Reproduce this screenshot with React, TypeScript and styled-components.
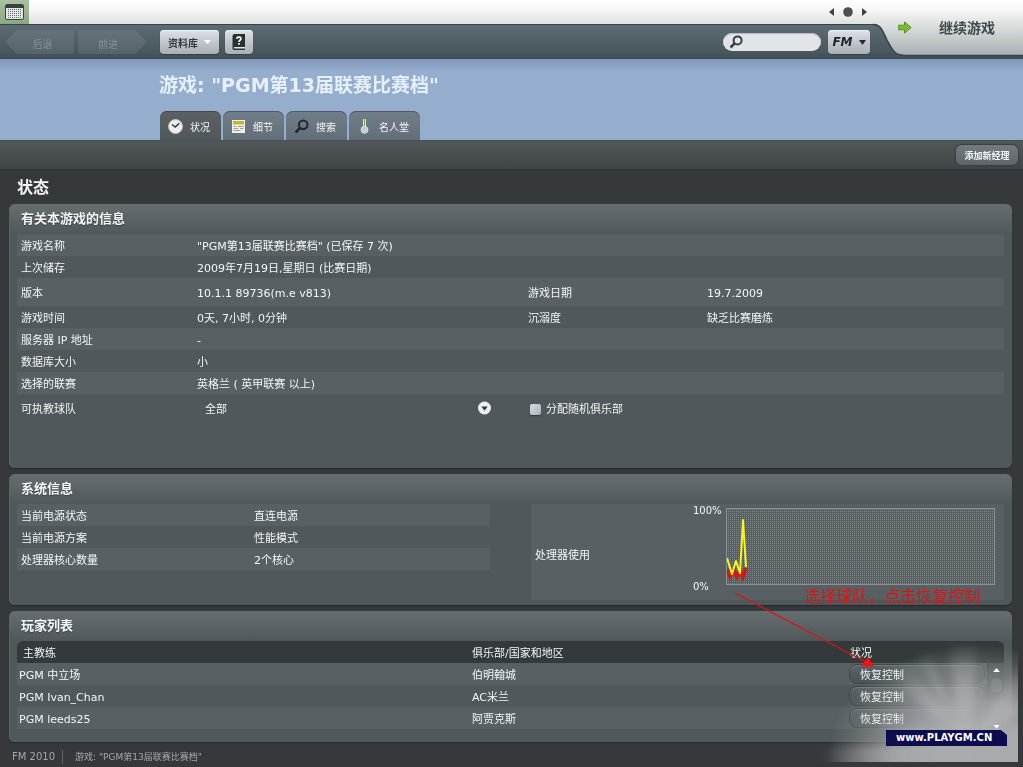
import React from "react";
import styled, { createGlobalStyle, css } from "styled-components";

const fonts = `"DejaVu Sans", "Noto Sans CJK SC", sans-serif`;

const GlobalStyle = createGlobalStyle`
  *, *::before, *::after { box-sizing: border-box; }
  html, body { margin: 0; background: #35393c; }
  body, button, input, select, table { font-family: ${fonts}; font-size: 11px; color: #f4f6f6; }
  button, input, select { margin: 0; padding: 0; border: 0; background: none; }
  button, select { cursor: pointer; }
  svg { display: block; flex: none; }
`;

const Page = styled.div`
  position: relative;
  min-height: 100vh;
  line-height: 16px;
  background: #35393c;
  overflow: hidden;
`;

/* ---------- header ---------- */

const Header = styled.header`
  display: grid;
  grid-template-columns: minmax(0, 1fr) 150px;
  height: 59px;
`;

const TopStrip = styled.div`
  display: flex;
  justify-content: space-between;
  height: 24px;
  background: linear-gradient(#ffffff, #f6f7f6 40%, #dde1e0);
`;

const CalendarButton = styled.button`
  display: flex;
  align-items: center;
  justify-content: center;
  width: 29px;
  height: 24px;
  background: linear-gradient(#a9c2a2, #8aa682);
`;

const Pager = styled.div`
  display: flex;
  align-items: center;
  gap: 9px;
  padding-right: 6px;
`;

const PagerButton = styled.button`
  display: flex;
`;

const NavBar = styled.nav`
  display: flex;
  align-items: center;
  height: 35px;
  padding: 0 3px 0 5px;
  border-top: 1px solid #35444b;
  background: linear-gradient(#5d6c72, #47555c 85%, #3c4a51);
`;

const HistoryButton = styled.button<{ $forward?: boolean }>`
  width: 69px;
  height: 24px;
  margin-right: 4px;
  font-size: 10px;
  color: #869297;
  background: linear-gradient(#66747a, #55636a);
  border-radius: 4px;
  clip-path: ${(p) =>
    p.$forward
      ? "polygon(0 0, 57px 0, 100% 50%, 57px 100%, 0 100%)"
      : "polygon(12px 0, 100% 0, 100% 100%, 12px 100%, 0 50%)"};
  padding: ${(p) => (p.$forward ? "2px 9px 0 0" : "2px 0 0 6px")};
`;

const SilverButton = styled.button<{ $width: number }>`
  display: flex;
  align-items: center;
  justify-content: center;
  gap: 6px;
  width: ${(p) => p.$width}px;
  height: 24px;
  font-size: 10px;
  font-weight: bold;
  color: #33393c;
  background: linear-gradient(#dfe2e6, #c2c7ce 50%, #a9afb8);
  border-radius: 4px;
  box-shadow: 0 1px 1px #333f45, inset 0 1px 0 #eef0f2;
`;

const ToolGroup = styled.div`
  display: flex;
  gap: 6px;
  margin-left: 9px;
`;

const SearchGroup = styled.div`
  display: flex;
  align-items: center;
  gap: 7px;
  margin-left: auto;
`;

const SearchBox = styled.label`
  display: flex;
  align-items: center;
  gap: 4px;
  width: 98px;
  height: 18px;
  padding: 0 8px 0 6px;
  border-radius: 9px;
  background: #e2e4e8;
  box-shadow: inset 0 1px 1px #b5bac0;
`;

const SearchInput = styled.input`
  width: 100%;
  min-width: 0;
  color: #33393c;
  outline: none;
`;

const FmMark = styled.span`
  font-size: 12px;
  font-style: italic;
  color: #1f2426;
`;

const ContinueArea = styled.div`
  display: grid;
  height: 59px;
  > * {
    grid-area: 1 / 1;
  }
`;

const ContinueButton = styled.button`
  display: flex;
  align-items: center;
  gap: 27px;
  height: 54px;
  padding-left: 25px;
  font-size: 14px;
  font-weight: bold;
  color: #43494b;
`;

/* ---------- title and tabs ---------- */

const Banner = styled.div`
  display: flex;
  flex-direction: column;
  justify-content: space-between;
  height: 81px;
  padding: 14px 0 0 159px;
  background: linear-gradient(#8197b9, #95aece 12px);
`;

const Title = styled.h1`
  margin: 0;
  font-size: 19px;
  line-height: 24px;
  color: #e6f0fb;
`;

const Tabs = styled.div`
  display: flex;
  gap: 2px;
  padding-left: 1px;
`;

const Tab = styled.button<{ $active?: boolean }>`
  display: flex;
  align-items: center;
  gap: 7px;
  height: 29px;
  padding: 1px 11px 0 8px;
  font-size: 10px;
  border-radius: 7px 7px 0 0;
  box-shadow: inset 0 1px 0 #4f5a66;
  background: linear-gradient(#717f8a, #626e78);
  ${(p) =>
    p.$active &&
    css`
      background: linear-gradient(#5c6163, #50575a);
      box-shadow: inset 0 1px 0 #41484c;
    `}
`;

const ActionBar = styled.div`
  display: flex;
  align-items: center;
  justify-content: flex-end;
  height: 30px;
  padding-right: 5px;
  border-top: 1px solid #454f58;
  border-bottom: 1px solid #2d3133;
  background: linear-gradient(#52585a, #3f4446);
`;

const AddButton = styled.button`
  width: 62px;
  height: 20px;
  font-size: 9px;
  font-weight: bold;
  border-radius: 6px;
  background: linear-gradient(#747b80, #5e6469);
  box-shadow: 0 0 1px 1px #3a3f42;
`;

/* ---------- panels ---------- */

const Main = styled.main`
  display: flex;
  flex-direction: column;
  gap: 6px;
  padding: 0 11px 0 9px;
`;

const SectionTitle = styled.h2`
  margin: 0;
  padding: 8px 0 0 8px;
  font-size: 16px;
  line-height: 20px;
`;

const Panel = styled.section<{ $bottom: number }>`
  padding: 0 8px ${(p) => p.$bottom}px;
  border-radius: 6px;
  background: linear-gradient(#676e71, #50585b 30px);
  box-shadow: inset 1px 0 0 #5d6568, 0 1px 1px #26292b;
`;

const PanelTitle = styled.h3`
  margin: 0;
  padding-left: 4px;
  font-size: 13px;
  line-height: 30px;
  text-shadow: 0 1px 1px #3a3f42;
`;

const InfoList = styled.dl`
  margin: 0;
`;

const InfoRow = styled.div<{ $columns: string; $tall?: boolean; $light?: boolean }>`
  display: grid;
  grid-template-columns: ${(p) => p.$columns};
  align-items: center;
  height: ${(p) => (p.$tall ? 28 : 22)}px;
  padding: 3px 0 0 4px;
  background: ${(p) => (p.$light ? "#586063" : "transparent")};
`;

const Term = styled.dt``;

const Detail = styled.dd`
  margin: 0;
`;

const SelectWrap = styled.div`
  position: relative;
  width: 295px;
  max-width: 100%;
`;

const Select = styled.select`
  appearance: none;
  display: block;
  width: 100%;
  height: 20px;
  padding-left: 8px;
  color: #f4f6f6;
  option {
    color: #222;
  }
`;

const SelectArrow = styled.span`
  position: absolute;
  top: 1px;
  right: 0;
  pointer-events: none;
`;

const CheckLabel = styled.label`
  display: flex;
  align-items: center;
  gap: 5px;
  padding-left: 2px;
`;

const CheckBox = styled.input`
  appearance: none;
  width: 11px;
  height: 11px;
  border-radius: 2px;
  background: linear-gradient(135deg, #d9dde2, #a9b0b8);
  box-shadow: 0 1px 1px #33393c;
  &:checked {
    background: #5b7f38;
  }
`;

const SystemGrid = styled.div`
  display: grid;
  grid-template-columns: 1fr 1fr;
  gap: 41px;
`;

const CpuBox = styled.div`
  display: flex;
  height: 96px;
  padding: 4px 9px 0 4px;
  background: #586063;
`;

const CpuLabel = styled.div`
  align-self: center;
  flex: 1;
  padding-top: 4px;
`;

const Axis = styled.div`
  display: flex;
  flex-direction: column;
  justify-content: space-between;
  width: 33px;
  height: 82px;
  font-size: 10px;
  line-height: 6px;
`;

const Graph = styled.div`
  flex: 0 1 269px;
  height: 77px;
  border: 1px solid #8b9294;
  background: conic-gradient(#7d8486 25%, transparent 0) 0 0 / 2px 2px;
`;

const Players = styled.table`
  width: 100%;
  table-layout: fixed;
  border-collapse: separate;
  border-spacing: 0;
`;

const HeadCell = styled.th`
  height: 22px;
  padding: 3px 0 0 1px;
  font-weight: normal;
  text-align: left;
  background: #34393b;
  &:first-child {
    padding-left: 6px;
    border-radius: 6px 0 0 0;
  }
  &:last-child {
    border-radius: 0 6px 0 0;
  }
`;

const PlayerRow = styled.tr`
  height: 22px;
  &:nth-child(odd) {
    background: #586063;
  }
`;

const Cell = styled.td`
  padding: 3px 0 0 1px;
  &:first-child {
    padding-left: 2px;
  }
`;

const ActionCell = styled.td`
  padding: 0 2px 0 0;
`;

const ResumeButton = styled.button`
  display: block;
  width: 100%;
  height: 20px;
  padding: 0 0 0 10px;
  text-align: left;
  border: 1px solid #3f4648;
  border-radius: 8px;
  background: linear-gradient(#5c6467, #4b5356);
  box-shadow: inset 0 1px 0 #747c7f;
`;

const ScrollCell = styled.td`
  padding: 0;
  vertical-align: top;
  background: #495053;
  border-left: 1px solid #3b4143;
`;

const Scroller = styled.div`
  display: flex;
  flex-direction: column;
  align-items: center;
  height: 66px;
  padding: 5px 0 0;
`;

const ScrollThumb = styled.div`
  width: 13px;
  height: 17px;
  margin: 5px 0 auto;
  border: 1px solid #3f4648;
  border-radius: 6px;
  background: #5f6769;
`;

const Footer = styled.footer`
  display: flex;
  align-items: center;
  height: 25px;
  padding: 4px 0 0 12px;
  font-size: 10px;
  color: #a3a8aa;
`;

const FooterGame = styled.span`
  margin-left: 7px;
  padding-left: 12px;
  font-size: 9px;
  line-height: 14px;
  border-left: 1px solid #5f6567;
`;

/* ---------- overlays ---------- */

const Glow = styled.div`
  position: absolute;
  right: 5px;
  bottom: 5px;
  pointer-events: none;
  mix-blend-mode: lighten;
`;

const SiteBadge = styled.a`
  position: absolute;
  right: 16px;
  bottom: 21px;
  width: 121px;
  height: 16px;
  padding-left: 10px;
  font-size: 10px;
  font-weight: bold;
  line-height: 15px;
  color: #fff;
  text-decoration: none;
  background: #0c0c4e;
  clip-path: polygon(0 0, 115px 0, 100% 5px, 100% 100%, 0 100%);
`;

const Note = styled.div`
  position: absolute;
  right: 43px;
  bottom: 160px;
  font-family: "Noto Sans CJK SC", sans-serif;
  font-size: 16px;
  line-height: 24px;
  color: #dc1414;
  pointer-events: none;
`;

const NoteArrow = styled.div`
  position: absolute;
  right: 147px;
  bottom: 94px;
  pointer-events: none;
`;

/* ---------- drawings ---------- */

const CalendarIcon = () => (
  <svg width="19" height="16" viewBox="0 0 19 16">
    <rect x="0.5" y="0.5" width="18" height="15" rx="1.5" fill="#e4e8e4" stroke="#3b4140" />
    <rect x="1" y="1" width="17" height="3" fill="#3b4140" />
    <path d="M3 5.500h14M3 7.500h14M3 9.500h14M3 11.500h14M3 13.500h14" stroke="#666d6c" strokeDasharray="1 1" />
  </svg>
);

const Triangle = ({ d, w, h, color }: { d: string; w: number; h: number; color: string }) => (
  <svg width={w} height={h} viewBox={`0 0 ${w} ${h}`}>
    <path d={d} fill={color} />
  </svg>
);

const HelpIcon = () => (
  <svg width="14" height="17" viewBox="0 0 14 17">
    <path d="M2.5 0H13v13H2.5C1.600 13 1.500 14.500 2.500 14.500H13V16H2.500C1 16 0.500 15 0.500 14V2C0.500 1 1.500 0 2.500 0z" fill="#2b3032" />
    <path d="M2.500 13.200H13v1H2.500z" fill="#f0f2f3" />
    <path d="M4.800 4.800C4.800 2.600 9 2.600 9 4.800C9 6.300 6.900 6.200 6.900 8" fill="none" stroke="#fff" strokeWidth="1.600" />
    <rect x="6.100" y="9" width="1.700" height="1.700" fill="#fff" />
  </svg>
);

const Magnifier = ({ color, size }: { color: string; size: number }) => (
  <svg width={size} height={size} viewBox="0 0 14 14">
    <circle cx="8.600" cy="5.400" r="4" fill="none" stroke={color} strokeWidth="2" />
    <path d="M5.600 8.400L1.500 12.500" stroke={color} strokeWidth="2.600" />
  </svg>
);

const ClockIcon = () => (
  <svg width="15" height="15" viewBox="0 0 15 15">
    <circle cx="7.500" cy="7.500" r="6.900" fill="#eeeeee" stroke="#c9cbcb" />
    <path d="M4 5.500L7.300 8L11.300 4.300" fill="none" stroke="#333" strokeWidth="1.500" />
  </svg>
);

const NotesIcon = () => (
  <svg width="15" height="15" viewBox="0 0 15 15">
    <path d="M1 1h13v13H1z" fill="#f1f1ea" />
    <path d="M2 2h11v3.500H2z" fill="#c9b42e" />
    <path d="M2.500 7.500h3M7 7.500h5.500M2.500 9.500h5M9 9.500h3.500M2.500 11.500h7" stroke="#9a9e9c" />
  </svg>
);

const MedalIcon = () => (
  <svg width="15" height="15" viewBox="0 0 15 15">
    <path d="M6 0h3v8H6z" fill="#dfe8d8" />
    <path d="M7 0h1v8H7z" fill="#76a83e" />
    <circle cx="7.500" cy="10.800" r="3.500" fill="#c3cbd0" stroke="#dfe4e7" strokeWidth="0.800" />
  </svg>
);

const GreenArrow = () => (
  <svg width="14" height="13" viewBox="0 0 14 13">
    <path d="M0.600 4.200H6.500V0.900L13.200 6.500L6.500 12.100V8.800H0.600z" fill="#7cbb33" stroke="#5c9426" />
  </svg>
);

const HeaderCurve = () => (
  <svg width="150" height="59" viewBox="0 0 150 59">
    <defs>
      <linearGradient id="navFill" x1="0" y1="24" x2="0" y2="59" gradientUnits="userSpaceOnUse">
        <stop offset="0" stopColor="#5d6c72" />
        <stop offset="0.850" stopColor="#47555c" />
        <stop offset="1" stopColor="#3c4a51" />
      </linearGradient>
      <linearGradient id="silverFill" x1="0" y1="0" x2="0" y2="55" gradientUnits="userSpaceOnUse">
        <stop offset="0" stopColor="#ffffff" />
        <stop offset="0.180" stopColor="#f6f7f6" />
        <stop offset="0.440" stopColor="#dde1e0" />
        <stop offset="1" stopColor="#a9afb2" />
      </linearGradient>
    </defs>
    <rect y="24" width="150" height="35" fill="url(#navFill)" />
    <path d="M0 0H150V55H32C21 55 19 49 14 40C9 30 8 24 0 24Z" fill="url(#silverFill)" />
    <path d="M150 55.500H32C21 55.500 19 49 14 40C9 30 8 24.500 0 24.500" fill="none" stroke="#35444b" strokeWidth="1.500" />
  </svg>
);

const CircleArrow = () => (
  <svg width="15" height="15" viewBox="0 0 15 15">
    <circle cx="7.500" cy="7" r="6.500" fill="#eceeef" />
    <path d="M4.300 5.500h6.400L7.500 9.800z" fill="#33393b" />
  </svg>
);

const CpuLines = () => (
  <svg width="24" height="75" viewBox="0 0 24 75">
    <path d="M0 60L3 68L7 61L10 68L13 61L16 68L19 59" fill="none" stroke="#d01818" strokeWidth="3.500" />
    <path d="M0 49L5 65L9 52L13 64L16 11L19 58" fill="none" stroke="#f6f61e" strokeWidth="2" strokeLinejoin="round" />
  </svg>
);

const Burst = () => (
  <svg width="205" height="126" viewBox="0 0 205 126">
    <defs>
      <radialGradient id="core" cx="0" cy="0" r="1" gradientUnits="userSpaceOnUse" gradientTransform="translate(165 116) scale(150 108)">
        <stop offset="0" stopColor="#acadaf" />
        <stop offset="0.450" stopColor="#a9aaac" stopOpacity="0.850" />
        <stop offset="0.700" stopColor="#a6a8aa" stopOpacity="0.450" />
        <stop offset="1" stopColor="#a0a2a4" stopOpacity="0" />
      </radialGradient>
      <linearGradient id="floor" x1="0" x2="1">
        <stop offset="0" stopColor="#a9aaac" stopOpacity="0" />
        <stop offset="0.350" stopColor="#a9aaac" stopOpacity="0.850" />
        <stop offset="1" stopColor="#a9aaac" />
      </linearGradient>
      <radialGradient id="ray" cx="150" cy="95" r="90" gradientUnits="userSpaceOnUse">
        <stop offset="0" stopColor="#c4c5c6" stopOpacity="0.300" />
        <stop offset="0.500" stopColor="#c4c5c6" stopOpacity="0.400" />
        <stop offset="1" stopColor="#c4c5c6" stopOpacity="0" />
      </radialGradient>
      <filter id="soft" x="-20%" y="-20%" width="140%" height="140%">
        <feGaussianBlur stdDeviation="4" />
      </filter>
      <clipPath id="frame">
        <rect width="205" height="126" />
      </clipPath>
    </defs>
    <g clipPath="url(#frame)">
      <rect width="205" height="126" fill="url(#core)" />
      <g filter="url(#soft)">
        <path d="M8 112L225 100V146H8z" fill="url(#floor)" />
        <path d="M120 88H225V145H120z" fill="#a9aaac" fillOpacity="0.850" />
        <path d="M150 100L56 30L84 12z" fill="url(#ray)" />
        <path d="M150 100L100 18L112 8z" fill="url(#ray)" />
        <path d="M145 100L136 4L164 4L158 100z" fill="url(#ray)" />
        <path d="M158 100L215 20L225 70z" fill="url(#ray)" />
        <path d="M150 100L10 92L10 76z" fill="url(#ray)" />
      </g>
    </g>
  </svg>
);

const ArrowDrawing = () => (
  <svg width="144" height="82" viewBox="0 0 144 82">
    <path d="M3 2L134 71" stroke="#dc1414" strokeWidth="1.300" />
    <path d="M142 76L129 75L136 66z" fill="#f01414" />
  </svg>
);

/* ---------- data ---------- */

const GAME_COLUMNS = "176fr 331fr 179fr 297fr";
const SYSTEM_COLUMNS = "233fr 236fr";

type GameRow = { cells: string[]; tall?: boolean };

const gameRows: GameRow[] = [
  { cells: ["游戏名称", '"PGM第13届联赛比赛档" (已保存 7 次)'] },
  { cells: ["上次储存", "2009年7月19日,星期日 (比赛日期)"] },
  { cells: ["版本", "10.1.1 89736(m.e v813)", "游戏日期", "19.7.2009"], tall: true },
  { cells: ["游戏时间", "0天, 7小时, 0分钟", "沉溺度", "缺乏比赛磨炼"] },
  { cells: ["服务器 IP 地址", "-"] },
  { cells: ["数据库大小", "小"] },
  { cells: ["选择的联赛", "英格兰 ( 英甲联赛 以上)"] },
];

const systemRows = [
  ["当前电源状态", "直连电源"],
  ["当前电源方案", "性能模式"],
  ["处理器核心数量", "2个核心"],
];

const players = [
  ["PGM 中立场", "伯明翰城"],
  ["PGM Ivan_Chan", "AC米兰"],
  ["PGM leeds25", "阿贾克斯"],
];

const tabs = [
  { label: "状况", icon: <ClockIcon />, active: true },
  { label: "细节", icon: <NotesIcon /> },
  { label: "搜索", icon: <Magnifier color="#24292b" size={15} /> },
  { label: "名人堂", icon: <MedalIcon /> },
];

export default function App() {
  return (
    <Page lang="zh-CN">
      <GlobalStyle />
      <Header>
        <div>
          <TopStrip>
            <CalendarButton aria-label="日历">
              <CalendarIcon />
            </CalendarButton>
            <Pager>
              <PagerButton aria-label="上一个">
                <Triangle d="M5 0v8L0 4z" w={5} h={8} color="#3d4345" />
              </PagerButton>
              <svg width="10" height="10" viewBox="0 0 10 10">
                <circle cx="5" cy="5" r="4.800" fill="#4a4f52" />
              </svg>
              <PagerButton aria-label="下一个">
                <Triangle d="M0 0v8L5 4z" w={5} h={8} color="#3d4345" />
              </PagerButton>
            </Pager>
          </TopStrip>
          <NavBar>
            <HistoryButton>后退</HistoryButton>
            <HistoryButton $forward>前进</HistoryButton>
            <ToolGroup>
              <SilverButton $width={59}>
                资料库
                <Triangle d="M0 1h7L3.500 5z" w={7} h={6} color="#ffffff" />
              </SilverButton>
              <SilverButton $width={28} aria-label="帮助">
                <HelpIcon />
              </SilverButton>
            </ToolGroup>
            <SearchGroup>
              <SearchBox>
                <Magnifier color="#3b4144" size={14} />
                <SearchInput aria-label="搜索" />
              </SearchBox>
              <SilverButton $width={42}>
                <FmMark>FM</FmMark>
                <Triangle d="M0 0h7L3.500 5z" w={7} h={5} color="#262b2d" />
              </SilverButton>
            </SearchGroup>
          </NavBar>
        </div>
        <ContinueArea>
          <HeaderCurve />
          <ContinueButton>
            <GreenArrow />
            继续游戏
          </ContinueButton>
        </ContinueArea>
      </Header>

      <Banner>
        <Title>游戏: "PGM第13届联赛比赛档"</Title>
        <Tabs>
          {tabs.map((t) => (
            <Tab key={t.label} $active={t.active}>
              {t.icon}
              {t.label}
            </Tab>
          ))}
        </Tabs>
      </Banner>
      <ActionBar>
        <AddButton>添加新经理</AddButton>
      </ActionBar>

      <Main>
        <SectionTitle>状态</SectionTitle>

        <Panel $bottom={46}>
          <PanelTitle>有关本游戏的信息</PanelTitle>
          <InfoList>
            {gameRows.map((row, i) => (
              <InfoRow key={row.cells[0]} $columns={GAME_COLUMNS} $tall={row.tall} $light={i % 2 === 0}>
                {row.cells.map((cell, c) =>
                  c % 2 === 0 ? <Term key={c}>{cell}</Term> : <Detail key={c}>{cell}</Detail>
                )}
              </InfoRow>
            ))}
            <InfoRow $columns={GAME_COLUMNS} $tall>
              <Term>
                <label htmlFor="teams">可执教球队</label>
              </Term>
              <Detail>
                <SelectWrap>
                  <Select id="teams" defaultValue="all">
                    <option value="all">全部</option>
                  </Select>
                  <SelectArrow>
                    <CircleArrow />
                  </SelectArrow>
                </SelectWrap>
              </Detail>
              <Detail>
                <CheckLabel>
                  <CheckBox type="checkbox" />
                  分配随机俱乐部
                </CheckLabel>
              </Detail>
            </InfoRow>
          </InfoList>
        </Panel>

        <Panel $bottom={5}>
          <PanelTitle>系统信息</PanelTitle>
          <SystemGrid>
            <InfoList>
              {systemRows.map(([name, value], i) => (
                <InfoRow key={name} $columns={SYSTEM_COLUMNS} $light={i % 2 === 0}>
                  <Term>{name}</Term>
                  <Detail>{value}</Detail>
                </InfoRow>
              ))}
            </InfoList>
            <CpuBox>
              <CpuLabel>处理器使用</CpuLabel>
              <Axis>
                <span>100%</span>
                <span>0%</span>
              </Axis>
              <Graph>
                <CpuLines />
              </Graph>
            </CpuBox>
          </SystemGrid>
        </Panel>

        <Panel $bottom={13}>
          <PanelTitle>玩家列表</PanelTitle>
          <Players>
            <colgroup>
              <col style={{ width: "46%" }} />
              <col />
              <col style={{ width: "138px" }} />
              <col style={{ width: "17px" }} />
            </colgroup>
            <thead>
              <tr>
                <HeadCell>主教练</HeadCell>
                <HeadCell>俱乐部/国家和地区</HeadCell>
                <HeadCell>状况</HeadCell>
                <HeadCell />
              </tr>
            </thead>
            <tbody>
              {players.map(([name, club], i) => (
                <PlayerRow key={name}>
                  <Cell>{name}</Cell>
                  <Cell>{club}</Cell>
                  <ActionCell>
                    <ResumeButton>恢复控制</ResumeButton>
                  </ActionCell>
                  {i === 0 && (
                    <ScrollCell rowSpan={3}>
                      <Scroller>
                        <Triangle d="M0 4L3.500 0L7 4z" w={7} h={4} color="#ffffff" />
                        <ScrollThumb />
                        <Triangle d="M0 0L3.500 4L7 0z" w={7} h={4} color="#ffffff" />
                      </Scroller>
                    </ScrollCell>
                  )}
                </PlayerRow>
              ))}
            </tbody>
          </Players>
        </Panel>
      </Main>

      <Footer>
        FM 2010
        <FooterGame>游戏: "PGM第13届联赛比赛档"</FooterGame>
      </Footer>

      <Glow>
        <Burst />
      </Glow>
      <SiteBadge href="#">www.PLAYGM.CN</SiteBadge>
      <NoteArrow>
        <ArrowDrawing />
      </NoteArrow>
      <Note>选择球队，点击恢复控制</Note>
    </Page>
  );
}
